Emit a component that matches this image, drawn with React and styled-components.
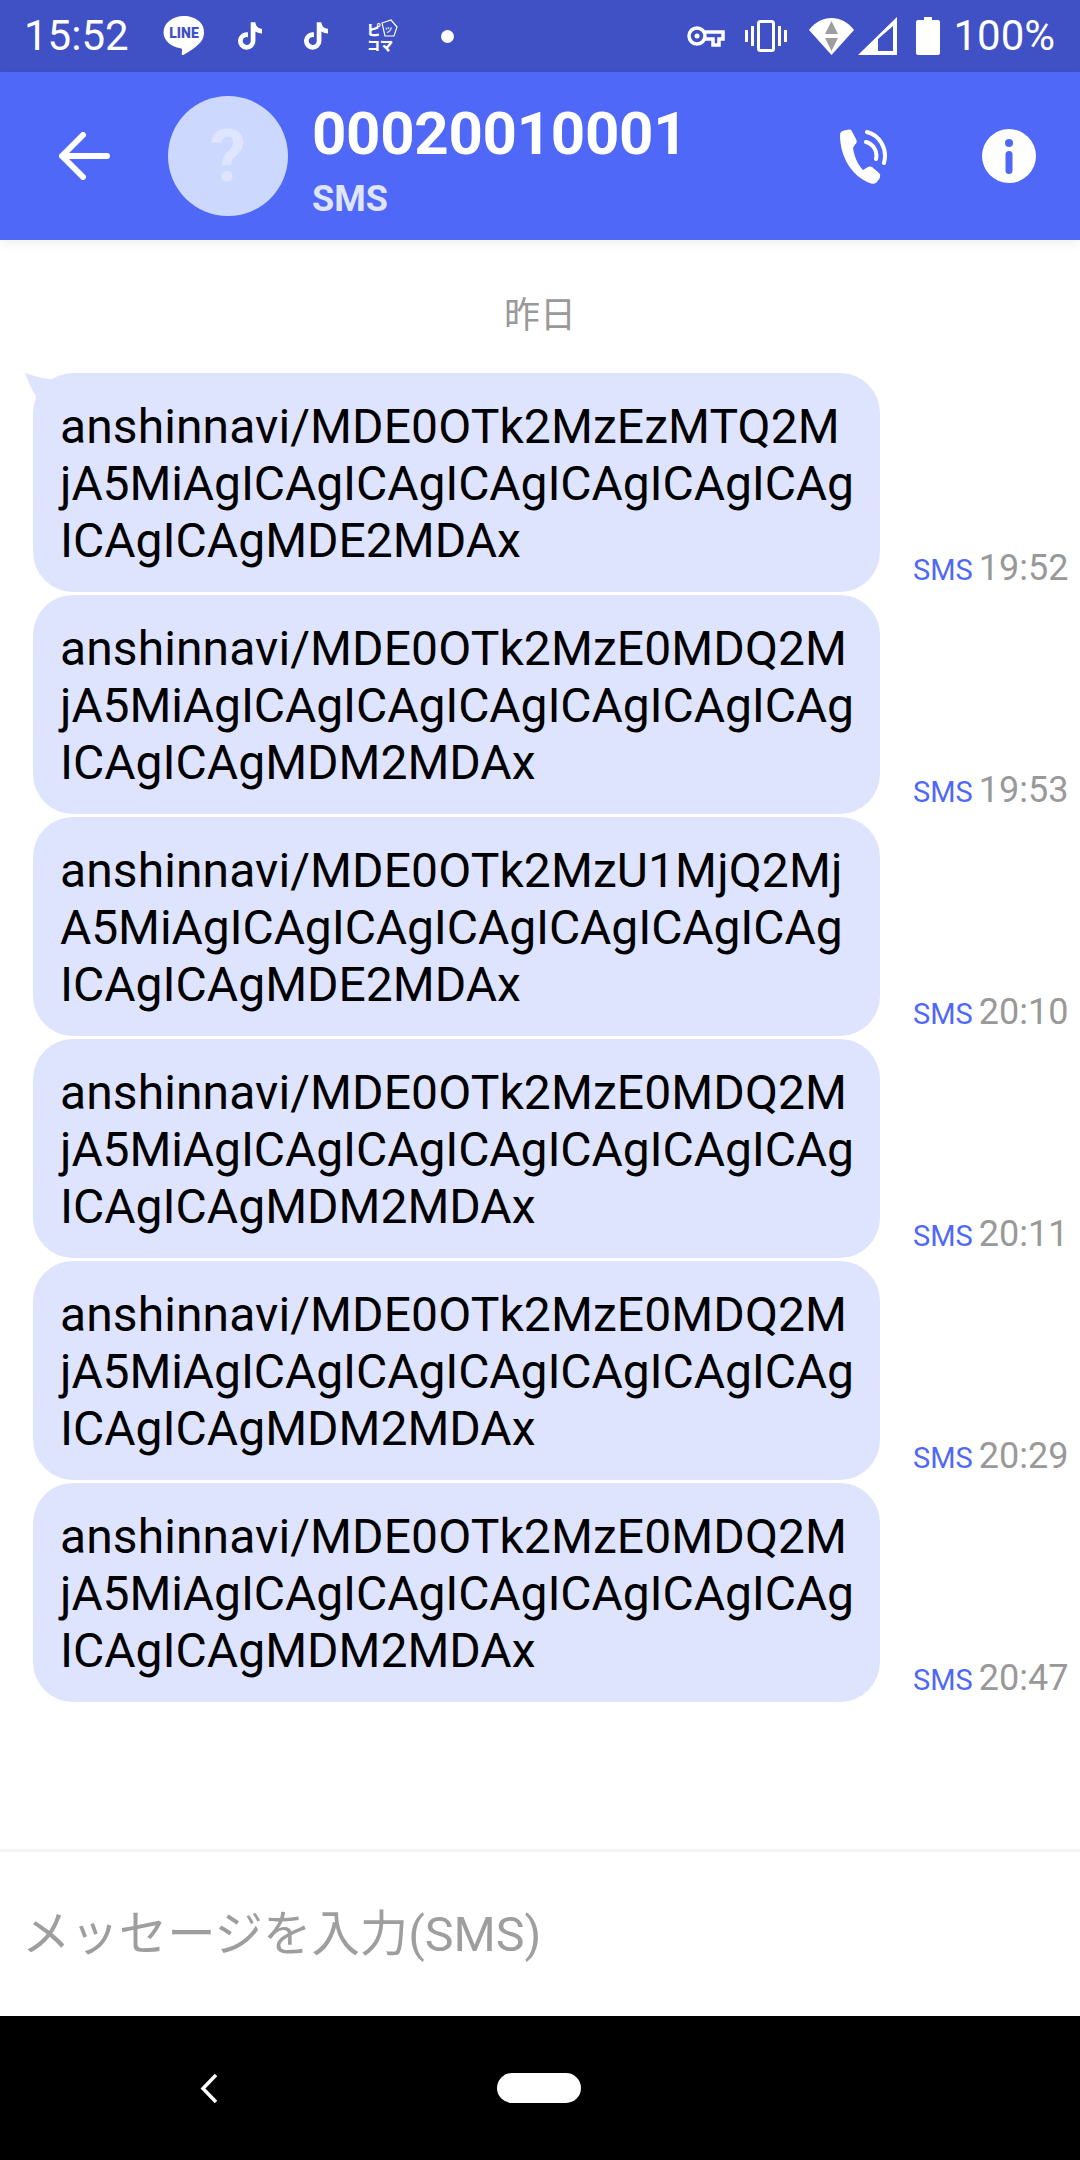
import React from 'react';
import styled, { createGlobalStyle } from 'styled-components';
import { FaTiktok } from 'react-icons/fa';

const GlobalStyle = createGlobalStyle`
  html, body {
    margin: 0;
    padding: 0;
    background: #fff;
  }
  * {
    box-sizing: border-box;
  }
`;

const Page = styled.div`
  width: 1080px;
  height: 2160px;
  display: flex;
  flex-direction: column;
  overflow: hidden;
  font-family: Roboto, "Noto Sans CJK JP", sans-serif;
  background: #fff;
`;

const StatusBar = styled.div`
  height: 72px;
  flex: none;
  display: flex;
  align-items: center;
  background: #3f51c4;
  color: #fff;
  padding: 0 25px 0 24px;
`;

const StatusText = styled.span`
  font-size: 42px;
  line-height: 72px;
  margin-left: ${p => p.$left || 0}px;
`;

const StatusIcons = styled.div`
  display: flex;
  align-items: center;
  margin-left: ${p => p.$left || 0}px;
`;

const StatusSlot = styled.span`
  display: flex;
  align-items: center;
  justify-content: center;
  width: ${p => p.$w}px;
  margin-left: ${p => p.$left || 0}px;
  font-size: 28px;
  color: #fff;
`;

const Dot = styled.span`
  display: block;
  width: 13px;
  height: 13px;
  border-radius: 50%;
  background: #fff;
`;

const Spacer = styled.div`
  flex: 1;
`;

const Header = styled.header`
  position: relative;
  z-index: 1;
  height: 168px;
  flex: none;
  display: flex;
  align-items: center;
  background: #4f68f8;
  box-shadow: 0 4px 10px rgba(0, 0, 0, 0.06);
  padding: 0 44px 0 58px;
`;

const BackButton = styled.div`
  width: 52px;
  height: 48px;
  display: flex;
  margin-right: 58px;
`;

const Avatar = styled.div`
  width: 120px;
  height: 120px;
  flex: none;
  border-radius: 50%;
  background: #cdd8ff;
  color: #dfe5ff;
  display: flex;
  align-items: center;
  justify-content: center;
  font-size: 72px;
  font-weight: 700;
`;

const Titles = styled.div`
  margin-left: 24px;
  padding-top: 8px;
  flex: 1;
  display: flex;
  flex-direction: column;
`;

const Title = styled.div`
  color: #fff;
  font-size: 60px;
  font-weight: 700;
  line-height: 70px;
  letter-spacing: -0.3px;
`;

const Subtitle = styled.div`
  color: #dfe5ff;
  font-size: 36px;
  font-weight: 700;
  line-height: 44px;
  margin-top: 8px;
`;

const HeaderIcon = styled.svg`
  display: block;
  flex: none;
  margin-left: ${p => p.$left || 0}px;
`;

const Conversation = styled.main`
  flex: 1;
  display: flex;
  flex-direction: column;
  padding: 0 0 0 33px;
`;

const DateLabel = styled.div`
  height: 133px;
  flex: none;
  display: flex;
  align-items: center;
  justify-content: center;
  padding: 10px 0 0 0;
  margin-left: -33px;
  font-size: 36px;
  color: #999;
`;

const MessageRow = styled.div`
  display: flex;
  align-items: flex-end;
  margin-bottom: 3px;
`;

const Bubble = styled.div`
  position: relative;
  width: 847px;
  height: 219px;
  flex: none;
  padding: 25px 0 0 27px;
  border-radius: 40px;
  background: #dfe4fe;
  color: #000;
  font-size: 48px;
  line-height: 57px;
`;

const BubbleLine = styled.div`
  white-space: nowrap;
  letter-spacing: ${p => p.$track || 0}px;
`;

const Tail = styled.svg`
  position: absolute;
  left: -8px;
  top: 0;
`;

const Meta = styled.div`
  margin-left: 33px;
  display: flex;
  align-items: baseline;
  white-space: nowrap;
  padding-bottom: 3px;
`;

const Via = styled.span`
  color: #4f68f8;
  font-size: 29px;
`;

const Time = styled.span`
  color: #999;
  font-size: 36px;
  margin-left: 6px;
`;

const Composer = styled.div`
  height: 167px;
  flex: none;
  display: flex;
  align-items: center;
  padding: 0 26px 8px 22px;
  border-top: 3px solid #f5f5f5;
  color: #9e9e9e;
  font-size: 48.4px;
`;

const NavBar = styled.nav`
  height: 144px;
  flex: none;
  display: flex;
  align-items: center;
  background: #000;
  padding: 0 0 0 200px;
`;

const NavPill = styled.div`
  width: 84px;
  height: 30px;
  border-radius: 15px;
  background: #fff;
  margin-left: 279px;
`;

// head = how many characters the first line holds
const messages = [
  { text: 'anshinnavi/MDE0OTk2MzEzMTQ2MjA5MiAgICAgICAgICAgICAgICAgICAgICAgICAgMDE2MDAx', head: 28, time: '19:52' },
  { text: 'anshinnavi/MDE0OTk2MzE0MDQ2MjA5MiAgICAgICAgICAgICAgICAgICAgICAgICAgMDM2MDAx', head: 28, time: '19:53' },
  { text: 'anshinnavi/MDE0OTk2MzU1MjQ2MjA5MiAgICAgICAgICAgICAgICAgICAgICAgICAgMDE2MDAx', head: 29, time: '20:10' },
  { text: 'anshinnavi/MDE0OTk2MzE0MDQ2MjA5MiAgICAgICAgICAgICAgICAgICAgICAgICAgMDM2MDAx', head: 28, time: '20:11' },
  { text: 'anshinnavi/MDE0OTk2MzE0MDQ2MjA5MiAgICAgICAgICAgICAgICAgICAgICAgICAgMDM2MDAx', head: 28, time: '20:29' },
  { text: 'anshinnavi/MDE0OTk2MzE0MDQ2MjA5MiAgICAgICAgICAgICAgICAgICAgICAgICAgMDM2MDAx', head: 28, time: '20:47' },
];

const LineIcon = () => (
  <svg width="42" height="42" viewBox="0 0 42 42">
    <path d="M21 1C9.600 1 .5 8.200.5 17.200c0 8 7.200 14.700 17 16 1 .2 1.800.8 1.500 2.300l-.3 3.500c-.1 1 .6 1.400 1.500.9 4-2.200 16.300-9.400 19.300-15.700 1.200-2.200 1.500-4.500 1.500-7C41.500 8.200 32.400 1 21 1z" fill="#fff" />
    <text x="21" y="23" textAnchor="middle" fontFamily="Roboto, sans-serif" fontWeight="900" fontSize="14" fill="#3f51c4">LINE</text>
  </svg>
);

const PiccomaIcon = () => (
  <svg width="38" height="40" viewBox="-3 -4 38 40" fontFamily="'Noto Sans CJK JP', sans-serif" fontWeight="900" fill="#fff">
    <text x="0" y="15" fontSize="14">ピ</text>
    <path d="M15 3l9-3 6 7-3 9-9 0z" fill="none" stroke="#fff" strokeWidth="1.200" />
    <text x="17" y="12" fontSize="9" fontWeight="500">ッ</text>
    <text x="0" y="30" fontSize="13">コ</text>
    <text x="13" y="30" fontSize="13">マ</text>
  </svg>
);

const KeyIcon = () => (
  <svg width="38" height="22" viewBox="0 0 38 22" fill="none" stroke="#fff" strokeWidth="3.500">
    <circle cx="10" cy="11" r="8" />
    <circle cx="10" cy="11" r="2.500" fill="#fff" stroke="none" />
    <path d="M18 7h18v7h-4v6h-6v-6h-8" />
  </svg>
);

const VibrateIcon = () => (
  <svg width="42" height="32" viewBox="0 0 42 32" fill="none">
    <rect x="13.500" y="1.500" width="15" height="29" rx="2" stroke="#fff" strokeWidth="3" />
    <path d="M0 10h3v12H0zM6 6h3v20H6zM33 6h3v20h-3zM39 10h3v12h-3z" fill="#fff" />
  </svg>
);

const WifiIcon = () => (
  <svg width="45" height="37" viewBox="0 0 45 37">
    <path d="M0 12C6 4 14 0 22.500 0S39 4 45 12L22.500 37z" fill="#fff" />
    <path d="M22.500 3l6.500 13H16zM16 20h13l-6.500 13z" fill="#9e9e9e" />
  </svg>
);

const SignalIcon = () => (
  <svg width="39" height="38" viewBox="0 0 39 38">
    <path d="M39 0v38H0zM35 9L20 22v12h15z" fill="#fff" fillRule="evenodd" />
  </svg>
);

const BatteryIcon = () => (
  <svg width="24" height="38" viewBox="0 0 24 38">
    <path d="M8 0h8v3h6a2 2 0 0 1 2 2v31a2 2 0 0 1-2 2H2a2 2 0 0 1-2-2V5a2 2 0 0 1 2-2h6z" fill="#fff" />
  </svg>
);

const BackArrow = () => (
  <svg width="52" height="48" viewBox="0 0 52 48" fill="none" stroke="#fff" strokeWidth="6" strokeLinecap="round" strokeLinejoin="round">
    <path d="M49 24H4M25 3L4 24l21 21" />
  </svg>
);

const CallIcon = () => (
  <HeaderIcon width="50" height="56" viewBox="0 -1 50 56" fill="none">
    <path d="M1 6C1 3 3 2 5 1.500L10 .5C11.500 .3 12.500 1 13 2.500L17.500 11C18 13 17.500 14.500 16 15.500L14 19C15 27 19 36 24 41L29 38C30.500 37 32 37.500 33 38L40 44C41.500 45.500 41.500 47.500 40.500 49.500L37.500 53.500C35.500 55 33 55 30.500 54C13 47 1 28 1 6z" fill="#fff" />
    <path d="M28 3C40 6 49 19 45 34M27 13C34 15 39 22 37 30" stroke="#fff" strokeWidth="4" strokeLinecap="round" />
  </HeaderIcon>
);

const InfoIcon = () => (
  <HeaderIcon $left={93} width="54" height="54" viewBox="0 0 54 54">
    <circle cx="27" cy="27" r="27" fill="#fff" />
    <circle cx="27" cy="14" r="4" fill="#4f68f8" />
    <rect x="23.500" y="22" width="7" height="23" rx="3.500" fill="#4f68f8" />
  </HeaderIcon>
);

const NavBack = () => (
  <svg width="18" height="31" viewBox="0 0 18 31" fill="none" stroke="#fff" strokeWidth="3.500">
    <path d="M16 2L3 15.500 16 29" />
  </svg>
);

const App = () => (
  <Page>
    <GlobalStyle />
    <StatusBar>
      <StatusText>15:52</StatusText>
      <StatusIcons $left={34}>
        <LineIcon />
        <StatusSlot $w={24} $left={33}><FaTiktok /></StatusSlot>
        <StatusSlot $w={24} $left={42}><FaTiktok /></StatusSlot>
        <StatusSlot $w={38} $left={36}><PiccomaIcon /></StatusSlot>
        <StatusSlot $w={13} $left={39}><Dot /></StatusSlot>
      </StatusIcons>
      <Spacer />
      <StatusIcons>
        <KeyIcon />
        <StatusSlot $w={42} $left={20}><VibrateIcon /></StatusSlot>
        <StatusSlot $w={45} $left={22}><WifiIcon /></StatusSlot>
        <StatusSlot $w={39} $left={4}><SignalIcon /></StatusSlot>
        <StatusSlot $w={24} $left={19}><BatteryIcon /></StatusSlot>
      </StatusIcons>
      <StatusText $left={13}>100%</StatusText>
    </StatusBar>

    <Header>
      <BackButton><BackArrow /></BackButton>
      <Avatar>?</Avatar>
      <Titles>
        <Title>00020010001</Title>
        <Subtitle>SMS</Subtitle>
      </Titles>
      <CallIcon />
      <InfoIcon />
    </Header>

    <Conversation>
      <DateLabel>昨日</DateLabel>
      {messages.map((m, i) => (
        <MessageRow key={i}>
          <Bubble>
            {i === 0 && (
              <Tail width="28" height="26" viewBox="0 0 28 26">
                <path d="M0 0Q14 5 27 6.500L27 26L12 25Q5 14 0 0z" fill="#dfe4fe" />
              </Tail>
            )}
            <BubbleLine $track={0.1}>{m.text.slice(0, m.head)}</BubbleLine>
            <BubbleLine $track={-0.1}>{m.text.slice(m.head, -16)}</BubbleLine>
            <BubbleLine>{m.text.slice(-16)}</BubbleLine>
          </Bubble>
          <Meta>
            <Via>SMS</Via>
            <Time>{m.time}</Time>
          </Meta>
        </MessageRow>
      ))}
    </Conversation>

    <Composer>メッセージを入力(SMS)</Composer>

    <NavBar>
      <NavBack />
      <NavPill />
    </NavBar>
  </Page>
);

export default App;
